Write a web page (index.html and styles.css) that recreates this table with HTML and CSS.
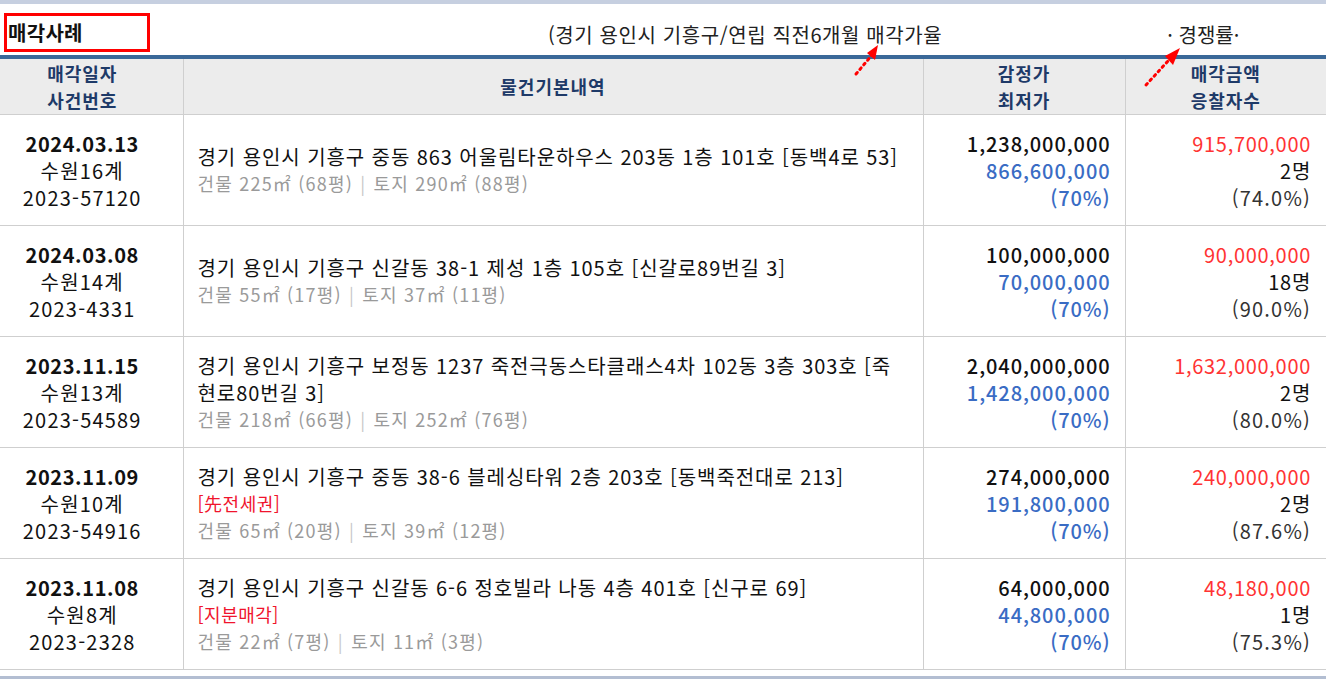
FILE: index.html
```html
<!DOCTYPE html>
<html lang="ko">
<head>
    <meta charset="UTF-8">
    <meta name="viewport" content="width=device-width, initial-scale=1.0">
    <title>매각사례</title>
    <link rel="stylesheet" href="styles.css">
</head>
<body>
    <div class="topbar"></div>

    <div class="caption">
        <div class="caption-box">매각사례</div>
        <span class="caption-title">(경기 용인시 기흥구/연립 직전6개월 매각가율</span>
        <span class="caption-rate">· 경쟁률·</span>
    </div>

    <div class="table-wrap">
        <!-- red dotted pointers over the header -->
        <svg class="pointer pointer-left" width="40" height="40" viewBox="0 0 40 40">
            <line x1="6" y1="33" x2="22" y2="14" stroke="#f00" stroke-width="3" stroke-dasharray="2 4" stroke-linecap="round"/>
            <polygon points="28,4 17,12 25,19" fill="#f00"/>
        </svg>
        <svg class="pointer pointer-right" width="50" height="50" viewBox="0 0 50 50">
            <line x1="4" y1="42" x2="26" y2="18" stroke="#f00" stroke-width="3" stroke-dasharray="2 4" stroke-linecap="round"/>
            <polygon points="38,5 23,13 31,22" fill="#f00"/>
        </svg>

        <table class="sale-table">
            <colgroup>
                <col class="col-date">
                <col class="col-info">
                <col class="col-price">
                <col class="col-sale">
            </colgroup>
            <thead>
                <tr>
                    <th class="th-date">매각일자<br>사건번호</th>
                    <th>물건기본내역</th>
                    <th>감정가<br>최저가</th>
                    <th>매각금액<br>응찰자수</th>
                </tr>
            </thead>
            <tbody>
                <tr>
                    <td class="date"><b>2024.03.13</b><br>수원16계<br>2023-57120</td>
                    <td class="info">경기 용인시 기흥구 중동 863 어울림타운하우스 203동 1층 101호 [동백4로 53]<div class="area">건물 225㎡ (68평) <span class="sep">|</span> 토지 290㎡ (88평)</div></td>
                    <td class="price">1,238,000,000<div class="low">866,600,000<br>(70%)</div></td>
                    <td class="sale"><span class="amount">915,700,000</span><br>2명<br><span class="ratio">(74.0%)</span></td>
                </tr>
                <tr>
                    <td class="date"><b>2024.03.08</b><br>수원14계<br>2023-4331</td>
                    <td class="info">경기 용인시 기흥구 신갈동 38-1 제성 1층 105호 [신갈로89번길 3]<div class="area">건물 55㎡ (17평) <span class="sep">|</span> 토지 37㎡ (11평)</div></td>
                    <td class="price">100,000,000<div class="low">70,000,000<br>(70%)</div></td>
                    <td class="sale"><span class="amount">90,000,000</span><br>18명<br><span class="ratio">(90.0%)</span></td>
                </tr>
                <tr>
                    <td class="date"><b>2023.11.15</b><br>수원13계<br>2023-54589</td>
                    <td class="info">경기 용인시 기흥구 보정동 1237 죽전극동스타클래스4차 102동 3층 303호 [죽현로80번길 3]<div class="area">건물 218㎡ (66평) <span class="sep">|</span> 토지 252㎡ (76평)</div></td>
                    <td class="price">2,040,000,000<div class="low">1,428,000,000<br>(70%)</div></td>
                    <td class="sale"><span class="amount">1,632,000,000</span><br>2명<br><span class="ratio">(80.0%)</span></td>
                </tr>
                <tr>
                    <td class="date"><b>2023.11.09</b><br>수원10계<br>2023-54916</td>
                    <td class="info">경기 용인시 기흥구 중동 38-6 블레싱타워 2층 203호 [동백죽전대로 213]<div class="tag">[先전세권]</div><div class="area">건물 65㎡ (20평) <span class="sep">|</span> 토지 39㎡ (12평)</div></td>
                    <td class="price">274,000,000<div class="low">191,800,000<br>(70%)</div></td>
                    <td class="sale"><span class="amount">240,000,000</span><br>2명<br><span class="ratio">(87.6%)</span></td>
                </tr>
                <tr>
                    <td class="date"><b>2023.11.08</b><br>수원8계<br>2023-2328</td>
                    <td class="info">경기 용인시 기흥구 신갈동 6-6 정호빌라 나동 4층 401호 [신구로 69]<div class="tag">[지분매각]</div><div class="area">건물 22㎡ (7평) <span class="sep">|</span> 토지 11㎡ (3평)</div></td>
                    <td class="price">64,000,000<div class="low">44,800,000<br>(70%)</div></td>
                    <td class="sale"><span class="amount">48,180,000</span><br>1명<br><span class="ratio">(75.3%)</span></td>
                </tr>
            </tbody>
        </table>
    </div>

    <div class="bottombar"></div>
</body>
</html>
```

FILE: styles.css
```css
body {
    margin: 0;
    font-family: "Noto Sans CJK KR", "Noto Sans", sans-serif;
    color: #111;
    background: #fff;
    width: 1326px;
}
.topbar {
    height: 4px;
    background: #c6cfe0;
}
.caption {
    height: 51px;
    display: flex;
    align-items: flex-start;
}
.caption-box {
    box-sizing: border-box;
    width: 146px;
    height: 39px;
    margin: 9px 0 0 4px;
    border: 3px solid #f00;
    padding-left: 1px;
    font-size: 20px;
    font-weight: bold;
    line-height: 33px;
    letter-spacing: 0.3px;
}
.caption-title {
    margin: 16px 0 0 398px;
    font-size: 20px;
    line-height: 30px;
    color: #222;
    letter-spacing: 0.6px;
}
.caption-rate {
    margin: 16px 0 0 225px;
    font-size: 20px;
    line-height: 30px;
    color: #222;
}
.table-wrap {
    position: relative;
}
.pointer {
    position: absolute;
}
.pointer-left {
    left: 850px;
    top: -14px;
}
.pointer-right {
    left: 1142px;
    top: -12px;
}
.sale-table {
    width: 100%;
    border-collapse: collapse;
    border-top: 4px solid #3a6898;
    table-layout: fixed;
}
.col-date { width: 183px; }
.col-info { width: 740px; }
.col-price { width: 202px; }
.sale-table th,
.sale-table td {
    border: 1px solid #cfcfcf;
    vertical-align: middle;
}
.sale-table tr > :first-child { border-left: none; }
.sale-table tr > :last-child { border-right: none; }
.sale-table th {
    height: 55px;
    padding: 0;
    background: #ececec;
    color: #1e3a68;
    font-size: 18px;
    font-weight: bold;
    line-height: 26.5px;
    letter-spacing: 1px;
}
.sale-table .th-date {
    padding-right: 18px;
}
.sale-table td {
    height: 110px;
    padding: 0;
    font-size: 20px;
    line-height: 27px;
}
.date {
    text-align: center;
    letter-spacing: 1.2px;
    padding-right: 18px !important;
}
.date b {
    letter-spacing: 0.6px;
}
.info {
    padding: 0 14px 0 14px !important;
    letter-spacing: 0.92px;
}
.area {
    font-size: 18px;
    color: #9a9a9a;
    letter-spacing: 1.2px;
}
.sep {
    color: #c8c8c8;
    margin: 0 1px;
}
.tag {
    font-size: 18px;
    color: #f0142d;
    letter-spacing: 0.5px;
}
.price {
    text-align: right;
    padding-right: 14px !important;
    font-weight: 500;
    letter-spacing: 0.9px;
}
.low {
    color: #3a6cc4;
}
.sale {
    text-align: right;
    padding-right: 15px !important;
    letter-spacing: 0.7px;
}
.amount {
    color: #f33;
}
.ratio {
    color: #333;
    letter-spacing: 1.2px;
}
.bottombar {
    margin-top: 6px;
    height: 4px;
    background: #b3bed2;
}
```
